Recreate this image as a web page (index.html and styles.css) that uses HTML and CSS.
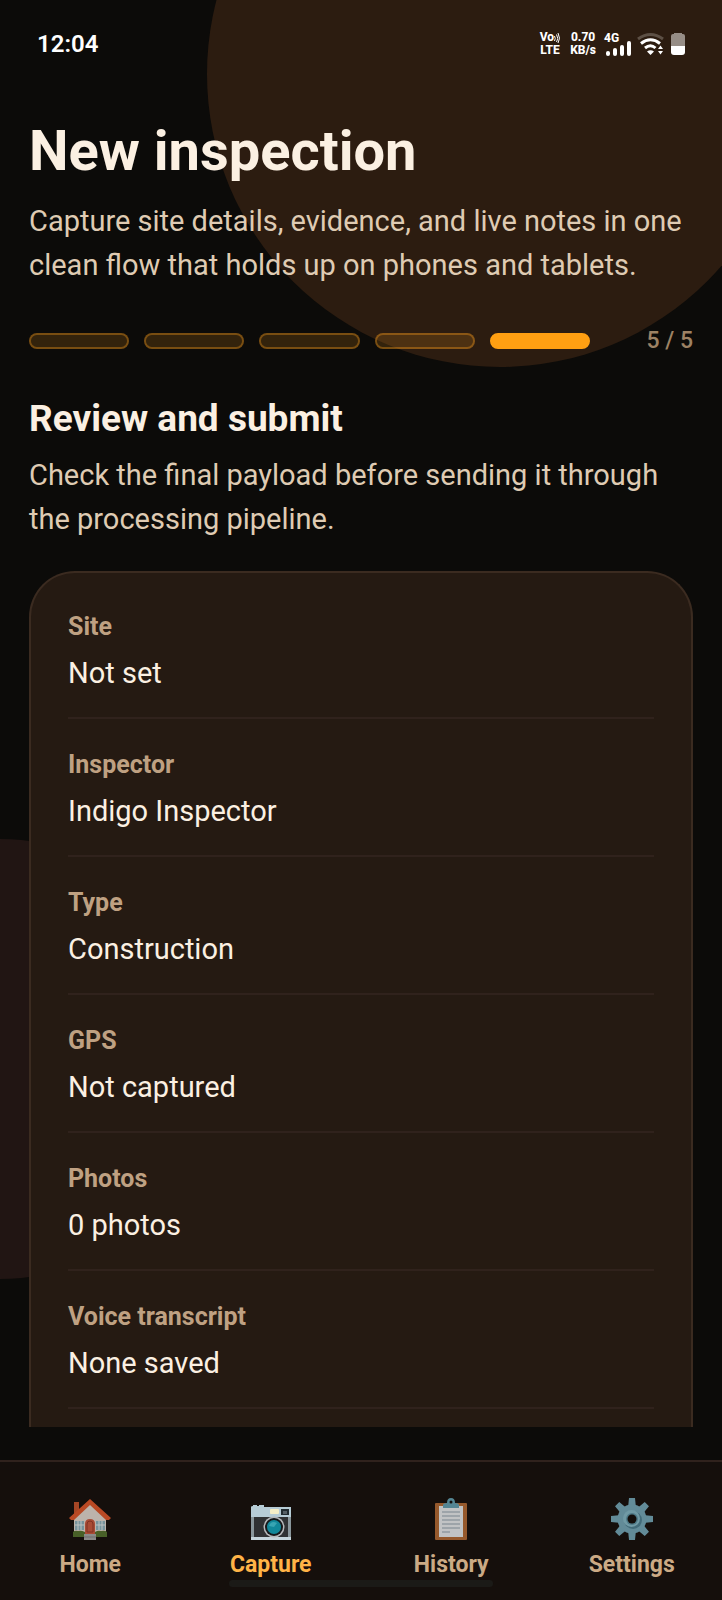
FILE: index.html
```html
<!DOCTYPE html>
<html lang="en">
<head>
<meta charset="utf-8">
<meta name="viewport" content="width=device-width, initial-scale=1">
<title>New inspection</title>
<link rel="stylesheet" href="styles.css">
</head>
<body>
<div class="app">
  <div class="glow glow-top"></div>
  <div class="glow glow-side"></div>

  <header class="status">
    <time class="clock">12:04</time>
    <div class="indicators">
      <div class="stack volte">
        <div class="voice"><span>Vo</span><svg width="6" height="10" viewBox="0 0 6 10" fill="none" stroke="#fff"><path d="M.5 3q1.500 2.500 0 5M2.500 1.500q2.500 4 0 7.500M4 0q3 5.500 0 10"/></svg></div>
        <span>LTE</span>
      </div>
      <div class="stack speed"><span>0.70</span><span>KB/s</span></div>
      <div class="signal">
        <span class="network">4G</span>
        <svg width="26" height="16" viewBox="0 0 26 16" fill="#fff">
          <rect x="1" y="11" width="4" height="5" rx="2"/>
          <rect x="8" y="8" width="4" height="8" rx="2"/>
          <rect x="15" y="5" width="4" height="11" rx="2"/>
          <rect x="22" y="1" width="4" height="15" rx="2"/>
        </svg>
      </div>
      <svg width="28" height="24" viewBox="0 0 28 24" fill="none" stroke="#fff" stroke-width="3">
        <path d="M1 7Q13.500-2 26 7" stroke="#5d5045"/>
        <path d="M4 11.500Q13.500 4 23 11.500M8 16Q13.500 11.500 18.500 16"/>
        <path d="M10 19.500q3.500-2.500 7 0L13.500 23z" fill="#fff" stroke="none"/>
        <path d="M21 17l2.500-3.500L26 17zM21 19l2.500 3.500L26 19z" fill="#fff" stroke="none"/>
      </svg>
      <svg width="14" height="24" viewBox="0 0 14 24">
        <path d="M3 1h8v1h1q2 0 2 2v10H0V4q0-2 2-2h1z" fill="#968d86"/>
        <path d="M0 14h14v6q0 3-3 3H3q-3 0-3-3z" fill="#fff"/>
      </svg>
    </div>
  </header>

  <main class="content">
    <h1 class="title">New inspection</h1>
    <p class="lead">Capture site details, evidence, and live notes in one clean flow that holds up on phones and tablets.</p>

    <div class="progress">
      <ol class="steps" aria-label="Progress">
        <li class="step"></li>
        <li class="step"></li>
        <li class="step"></li>
        <li class="step"></li>
        <li class="step step-current" aria-current="step"></li>
      </ol>
      <span class="count">5 / 5</span>
    </div>

    <h2 class="heading">Review and submit</h2>
    <p class="lead">Check the final payload before sending it through the processing pipeline.</p>

    <dl class="card">
      <div class="row"><dt>Site</dt><dd>Not set</dd></div>
      <div class="row"><dt>Inspector</dt><dd>Indigo Inspector</dd></div>
      <div class="row"><dt>Type</dt><dd>Construction</dd></div>
      <div class="row"><dt>GPS</dt><dd>Not captured</dd></div>
      <div class="row"><dt>Photos</dt><dd>0 photos</dd></div>
      <div class="row"><dt>Voice transcript</dt><dd>None saved</dd></div>
    </dl>
  </main>

  <nav class="tabs" aria-label="Main">
    <div class="gesture"></div>
    <a class="tab" href="#home">
      <svg class="icon" viewBox="0 0 42 42">
        <path d="M5 4h5v12H5z" fill="#c9542c"/>
        <path d="M5 19L21 5l16 14v19H5z" fill="#e6dcd3"/>
        <path d="M21 1L0 20l2 2h3L21 7l16 15h3l2-2z" fill="#e2582b"/>
        <path d="M6 23h9v9H6zM27 23h9v9h-9z" fill="#8fb5c0"/>
        <path d="M9 23v9M12 23v9M6 27h9M30 23v9M33 23v9M27 27h9" stroke="#e6eef0" fill="none"/>
        <path d="M4 34q2-2 5-1 3-1 7 1v5H4zM26 34q3-2 6-1 4-1 6 1v5H26z" fill="#55752f"/>
        <path d="M16 36V26q0-5 5-5t5 5v10z" fill="#cf5a40"/>
        <path d="M18 34V26q0-3 3-3t3 3v8z" fill="none" stroke="#9c3a28"/>
        <path d="M15 36h12v6H15z" fill="#a9a9a9"/>
        <path d="M15 39h12" stroke="#838383"/>
      </svg>
      <span>Home</span>
    </a>
    <a class="tab tab-active" href="#capture" aria-current="page">
      <svg class="icon" viewBox="0 0 42 42">
        <path d="M1 9q0-1 2-1V7h4v1h2V7h5v2h27v11H1z" fill="#b6ccd6"/>
        <path d="M1 19h40v23H1z" fill="#303234"/>
        <path d="M1 19h3v20H1zM38 19h3v20h-3z" fill="#89969b"/>
        <path d="M1 39h40v3H1z" fill="#c5d5dc"/>
        <rect x="20" y="11" width="9" height="5" rx="1" fill="#f6efc8"/>
        <rect x="31" y="11" width="8" height="6" fill="#222c31"/>
        <rect x="33" y="13" width="4" height="3" fill="#566167"/>
        <circle cx="24" cy="29" r="10.500" fill="#b6b8ba"/>
        <circle cx="24" cy="29" r="9" fill="#15191b"/>
        <circle cx="24" cy="29" r="7" fill="#11889a"/>
        <path d="M19 28q2-6 8-3l-3 4z" fill="#38a5b3"/>
      </svg>
      <span>Capture</span>
    </a>
    <a class="tab" href="#history">
      <svg class="icon" viewBox="0 0 42 42">
        <rect x="5" y="5" width="32" height="37" rx="1" fill="#b76c34"/>
        <path d="M9 8h24v31H9z" fill="#edf0f2"/>
        <path d="M12 14h18M12 18h18M12 22h18M12 26h18M12 30h18M12 34h8" stroke="#92a4b0"/>
        <path d="M13 10V7q0-2 4-2 0-5 4-5t4 5q4 0 4 2v3z" fill="#64a3b5"/>
        <circle cx="21" cy="4" r="1.500" fill="#150f0c"/>
      </svg>
      <span>History</span>
    </a>
    <a class="tab" href="#settings">
      <svg class="icon" viewBox="0 0 42 42">
        <g fill="#76aabc">
          <path id="tooth" d="M18 0h6l1 10h-8zM18 42h6l1-10h-8z"/>
          <use href="#tooth" transform="rotate(45 21 21)"/>
          <use href="#tooth" transform="rotate(90 21 21)"/>
          <use href="#tooth" transform="rotate(135 21 21)"/>
          <circle cx="21" cy="21" r="14.500"/>
        </g>
        <circle cx="22" cy="22" r="9" fill="#4e8395"/>
        <circle cx="20.500" cy="20.500" r="8.500" fill="#87bdcc"/>
        <circle cx="21" cy="21" r="6" fill="#5c93a5"/>
        <circle cx="21" cy="21" r="4.500" fill="#130e0b"/>
      </svg>
      <span>Settings</span>
    </a>
  </nav>
</div>
</body>
</html>
```
FILE: styles.css
```css
* {
  box-sizing: border-box;
  margin: 0;
  padding: 0;
}

body {
  background: #0c0b09;
  color: #fbf0e2;
  font-family: Roboto, "Liberation Sans", sans-serif;
}

.app {
  position: relative;
  display: flex;
  flex-direction: column;
  min-height: 100vh;
  overflow: hidden;
}

.glow {
  position: absolute;
  border-radius: 50%;
}

.glow-top {
  top: -219px;
  right: -71px;
  width: 586px;
  height: 586px;
  background: #2c1c10;
}

.glow-side {
  top: 839px;
  left: -220px;
  width: 440px;
  height: 440px;
  background: #211513;
}

.status,
.content,
.tabs {
  position: relative;
}

.status {
  display: flex;
  align-items: center;
  justify-content: space-between;
  height: 88px;
  padding: 0 37px;
  color: #fff;
}

.clock {
  font-size: 24px;
  font-weight: 600;
  line-height: 28px;
}

.indicators {
  display: flex;
  align-items: center;
  gap: 6px;
}

.stack {
  display: flex;
  flex-direction: column;
  align-items: center;
  font-size: 12px;
  font-weight: 800;
  line-height: 13px;
}

.volte {
  margin-right: 4px;
}

.voice {
  display: flex;
  align-items: center;
}

.speed {
  margin-right: 3px;
}

.signal {
  position: relative;
  display: flex;
  align-items: flex-end;
  height: 23px;
}

.network {
  position: absolute;
  top: -2px;
  left: -1px;
  font-size: 12px;
  font-weight: 800;
  line-height: 14px;
}

.content {
  flex: 1;
  display: flex;
  flex-direction: column;
  padding: 31px 29px 33px;
}

.title {
  margin-bottom: 16px;
  font-size: 56px;
  font-weight: 700;
  line-height: 64px;
}

.lead {
  color: #dfcbb3;
  font-size: 29px;
  line-height: 44px;
}

.progress {
  display: flex;
  align-items: center;
  justify-content: space-between;
  gap: 30px;
  margin: 40px 0 42px;
}

.steps {
  flex: 1;
  display: flex;
  gap: 15px;
  list-style: none;
}

.step {
  flex: 1;
  height: 16px;
  border: 2px solid rgba(255, 159, 28, 0.45);
  border-radius: 8px;
  background: rgba(255, 159, 28, 0.16);
  background-clip: padding-box;
}

.step-current {
  border-color: #ff9f12;
  background: #ff9f12;
}

.count {
  min-width: 73px;
  color: #9d8264;
  font-size: 23px;
  font-weight: 500;
  line-height: 28px;
  text-align: right;
}

.heading {
  margin-bottom: 12px;
  font-size: 37px;
  font-weight: 700;
  line-height: 44px;
}

.card {
  flex: 1;
  margin-top: 30px;
  padding: 8px 37px 0;
  border: 2px solid #3b2b20;
  border-bottom: 0;
  border-radius: 46px 46px 0 0;
  background: #251a12;
}

.row {
  padding: 30px 0 22px;
  border-bottom: 2px solid #30221c;
}

.row dt {
  margin-bottom: 8px;
  color: #bfa182;
  font-size: 25px;
  font-weight: 700;
  line-height: 32px;
}

.row dd {
  font-size: 29px;
  line-height: 44px;
}

.tabs {
  display: grid;
  grid-template-columns: repeat(4, 1fr);
  padding: 36px 0 19px;
  border-top: 2px solid #30221d;
  background: #150f0c;
}

.tab {
  position: relative;
  display: flex;
  flex-direction: column;
  align-items: center;
  gap: 9px;
  color: #cbaa85;
  font-size: 23px;
  font-weight: 700;
  line-height: 32px;
  text-decoration: none;
}

.tab-active {
  color: #ffb347;
}

.icon {
  width: 42px;
  height: 42px;
  opacity: 0.8;
}

.tab-active .icon {
  opacity: 1;
}

.gesture {
  position: absolute;
  bottom: 13px;
  left: 50%;
  width: 264px;
  height: 7px;
  border-radius: 4px;
  background: #1b1a17;
  transform: translateX(-50%);
}
```
